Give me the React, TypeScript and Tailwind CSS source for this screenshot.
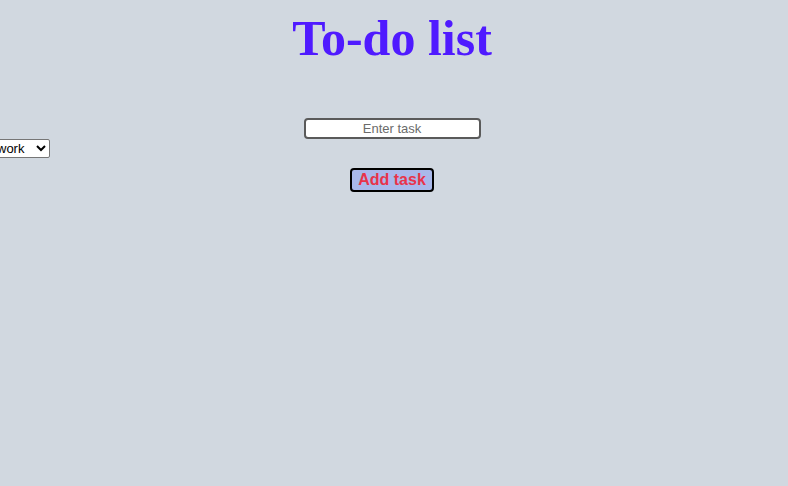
export default function App() {
  return (
    <div className="min-h-[486px] bg-[#d1d8e0] pr-[4px] pt-[10px] font-['Liberation_Sans',sans-serif]">
      <h1 className="text-center font-['Liberation_Serif',serif] text-[50px] font-bold leading-[57px] text-[#4f1aff]">
        To-do list
      </h1>
      <div className="mt-[51px] flex justify-center">
        <input
          type="text"
          placeholder="Enter task"
          className="h-[21px] w-[177px] rounded-[4px] border-2 border-[#5a5a5a] bg-white text-center text-[13px] text-black placeholder:text-[#6b6b6b] outline-none"
        />
      </div>
      <div className="flex">
        <select className="-ml-[8px] h-[19px] w-[58px] rounded-[2px] border border-[#767676] bg-white text-[13px] text-black">
          <option>work</option>
          <option>personal</option>
        </select>
      </div>
      <div className="mt-[10px] flex justify-center">
        <button className="h-[24px] w-[84px] rounded-[4px] border-2 border-black bg-[#a9b8ea] text-[16px] font-bold leading-none text-[#e8334a]">
          Add task
        </button>
      </div>
    </div>
  );
}
